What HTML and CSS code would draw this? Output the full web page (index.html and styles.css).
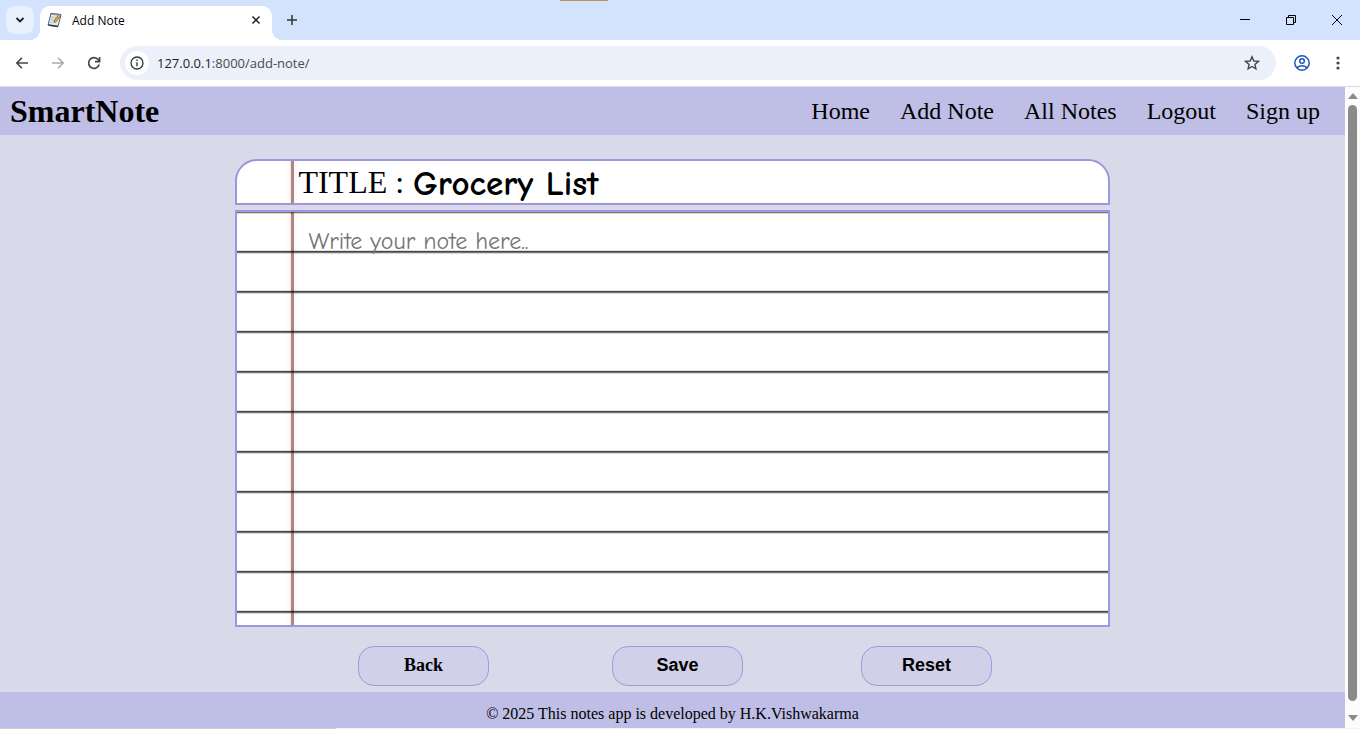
FILE: index.html
```html
<!DOCTYPE html>
<html lang="en">
<head>
<meta charset="utf-8">
<title>Add Note</title>
<link rel="stylesheet" href="styles.css">
</head>
<body>
<div class="tabstrip">
  <button class="tab-search" aria-label="Search tabs"><svg width="10" height="8" viewBox="0 0 10 8"><path d="M1.500 2l3.500 3.500 3.500-3.500" fill="none" stroke="#1f1f1f" stroke-width="1.800"/></svg></button>
  <div class="tab">
    <svg class="favicon" width="16" height="16" viewBox="0 0 16 16"><path d="M4 1.500L14 2.500 11 14.500 1 13z" fill="#dfeaf2" stroke="#59626b"/><path d="M1.300 13L11 14.500" stroke="#30363c" stroke-width="1.600"/><path d="M4 5l5 .5M3.500 7.500l4 .5M3 10l5 .7" stroke="#9bb8cc" stroke-width=".8"/><path d="M4 1v2M6 1v2M8 1.300v2M10 1.500v2" stroke="#4b5862" stroke-width=".7"/><path d="M7.500 10L12.500 3.500" stroke="#705018" stroke-width="2.800"/><path d="M8 9.500L12.500 3.500" stroke="#efb53b" stroke-width="1.500"/></svg>
    <span class="tab-title">Add Note</span>
    <button class="icon-btn" aria-label="Close tab"><svg width="10" height="10" viewBox="0 0 10 10"><path d="M1.500 1.500l7 7M8.500 1.500l-7 7" stroke="#1f1f1f" stroke-width="1.500"/></svg></button>
  </div>
  <button class="icon-btn new-tab" aria-label="New tab"><svg width="12" height="12" viewBox="0 0 12 12"><path d="M6 1v10M1 6h10" stroke="#30343a" stroke-width="1.500"/></svg></button>
  <div class="load-bar"></div>
  <div class="window-controls">
    <button class="icon-btn" aria-label="Minimize"><svg width="12" height="12" viewBox="0 0 12 12"><path d="M1 5.500h10" stroke="#000"/></svg></button>
    <button class="icon-btn" aria-label="Restore"><svg width="12" height="12" viewBox="0 0 12 12"><path d="M1.500 3.500h7v7h-7zM3.500 3.500v-2h7v7h-2" fill="none" stroke="#000"/></svg></button>
    <button class="icon-btn" aria-label="Close"><svg width="12" height="12" viewBox="0 0 12 12"><path d="M1 1l10 10M11 1L1 11" stroke="#000"/></svg></button>
  </div>
</div>
<div class="toolbar">
  <button class="icon-btn" aria-label="Back"><svg width="14" height="14" viewBox="0 0 14 14"><path d="M13 7H2M7 1.800L1.800 7 7 12.200" fill="none" stroke="#44474a" stroke-width="1.600"/></svg></button>
  <button class="icon-btn" aria-label="Forward"><svg width="14" height="14" viewBox="0 0 14 14"><path d="M1 7h11M7 1.800L12.200 7 7 12.200" fill="none" stroke="#aaacae" stroke-width="1.600"/></svg></button>
  <button class="icon-btn" aria-label="Reload"><svg width="14" height="14" viewBox="0 0 14 14"><path d="M12.200 8.500A5.400 5.400 0 1 1 11.300 3.700L12.500 5M12.600 1v4.600H8" fill="none" stroke="#44474a" stroke-width="1.700"/></svg></button>
  <div class="omnibox">
    <button class="site-info" aria-label="Site information"><svg width="14" height="14" viewBox="0 0 14 14"><circle cx="7" cy="7" r="6" fill="none" stroke="#34373b" stroke-width="1.300"/><path d="M7 6.200v4M7 3.600v1.400" stroke="#34373b" stroke-width="1.400"/></svg></button>
    <span class="url"><span class="host">127.0.0.1</span>:8000/add-note/</span>
    <button class="icon-btn star" aria-label="Bookmark"><svg width="16" height="16" viewBox="0 0 16 16"><path d="M8 1.800l1.800 4.200 4.600.4-3.500 3 1 4.500L8 11.500l-3.900 2.400 1-4.500-3.500-3 4.600-.4z" fill="none" stroke="#44474a" stroke-width="1.400"/></svg></button>
  </div>
  <button class="icon-btn profile" aria-label="Profile"><svg width="18" height="18" viewBox="0 0 18 18"><g fill="none" stroke="#1a57b8" stroke-width="1.500"><circle cx="9" cy="9" r="7.200"/><circle cx="9" cy="7" r="2.300"/><path d="M4 14.200C6 11 12 11 14 14.200"/></g></svg></button>
  <button class="icon-btn" aria-label="Menu"><svg width="4" height="14" viewBox="0 0 4 14"><g fill="#44474a"><circle cx="2" cy="2" r="1.600"/><circle cx="2" cy="7" r="1.600"/><circle cx="2" cy="12" r="1.600"/></g></svg></button>
</div>
<div class="viewport">
  <div class="page">
    <header class="site-header">
      <h1 class="brand">SmartNote</h1>
      <nav class="site-nav"><a href="#">Home</a><a href="#">Add Note</a><a href="#">All Notes</a><a href="#">Logout</a><a href="#">Sign up</a></nav>
    </header>
    <form class="note-form">
      <div class="title-row">
        <label for="title">TITLE :</label>
        <input id="title" class="title-input" type="text" value="Grocery List">
      </div>
      <textarea class="note-body" aria-label="Note" placeholder="Write your note here.."></textarea>
      <div class="actions">
        <a class="action back" href="#">Back</a>
        <button class="action" type="submit">Save</button>
        <button class="action" type="reset">Reset</button>
      </div>
    </form>
    <footer class="site-footer">© 2025 This notes app is developed by H.K.Vishwakarma</footer>
  </div>
  <div class="scrollbar">
    <svg width="10" height="6" viewBox="0 0 10 6"><path d="M5 0l5 6H0z" fill="#8a8a8a"/></svg>
    <div class="thumb"></div>
    <svg width="10" height="6" viewBox="0 0 10 6"><path d="M0 0h10L5 6z" fill="#8a8a8a"/></svg>
  </div>
</div>
<div class="bottom-edge"></div>
</body>
</html>
```
FILE: styles.css
```css
* { box-sizing: border-box; }
body {
  margin: 0;
  height: 100vh;
  display: flex;
  flex-direction: column;
  overflow: hidden;
  background: #fff;
  font-family: "Liberation Serif", "Times New Roman", serif;
  color: #000;
}
button { padding: 0; border: 0; background: none; font: inherit; color: inherit; }
svg { display: block; }
.icon-btn { display: flex; align-items: center; justify-content: center; flex: none; }

/* Browser chrome */
.tabstrip {
  position: relative;
  flex: none;
  display: flex;
  align-items: center;
  height: 40px;
  padding: 0 17px 0 6px;
  background: #d3e3fd;
  font-family: "Open Sans", sans-serif;
}
.tab-search {
  display: flex;
  align-items: center;
  justify-content: center;
  width: 28px;
  height: 28px;
  border-radius: 9px;
  background: #e9f1fe;
}
.tab {
  position: relative;
  align-self: flex-end;
  display: flex;
  align-items: center;
  width: 232px;
  height: 34px;
  margin-left: 6px;
  padding: 0 11px 6px 7px;
  border-radius: 10px 10px 0 0;
  background: #fff;
  font-size: 12px;
}
.tab::before, .tab::after {
  content: "";
  position: absolute;
  bottom: 0;
  width: 10px;
  height: 10px;
}
.tab::before { right: 100%; background: radial-gradient(circle at 0 0, transparent 10px, #fff 10px); }
.tab::after { left: 100%; background: radial-gradient(circle at 100% 0, transparent 10px, #fff 10px); }
.tab-title { flex: 1; margin-left: 9px; }
.new-tab { margin-left: 14px; }
.load-bar {
  position: absolute;
  top: 0;
  left: 560px;
  width: 240px;
  height: 1px;
  background: linear-gradient(90deg, #b8905f 20%, #dde5f3 20%);
}
.window-controls { display: flex; gap: 34px; margin-left: auto; }
.toolbar {
  flex: none;
  display: flex;
  align-items: center;
  gap: 22px;
  height: 47px;
  padding: 0 20px 0 15px;
  border-bottom: 1px solid #d9dce3;
  background: #fff;
  font-family: "Open Sans", sans-serif;
}
.omnibox {
  flex: 1;
  display: flex;
  align-items: center;
  height: 34px;
  margin-right: -5px;
  margin-left: -3px;
  padding: 0 16px 0 5px;
  border-radius: 17px;
  background: #ebf0fa;
}
.site-info {
  display: flex;
  align-items: center;
  justify-content: center;
  width: 24px;
  height: 24px;
  border-radius: 12px;
  background: #fff;
}
.url { flex: 1; margin-left: 8px; font-size: 13px; color: #494c50; }
.host { color: #1f1f1f; }
.profile { margin-right: 3px; }

/* Page */
.viewport { flex: 1; display: flex; min-height: 0; }
.page { flex: 1; display: flex; flex-direction: column; min-width: 0; background: #dad9e9; }
.site-header {
  flex: none;
  display: flex;
  align-items: center;
  justify-content: space-between;
  height: 48px;
  padding: 0 25px 0 10px;
  background: #bfbee6;
}
.brand { margin: 0; font-size: 32px; }
.site-nav { display: flex; gap: 30px; font-size: 24px; }
.site-nav a { color: #000; text-decoration: none; }
.note-form {
  flex: 1;
  display: flex;
  flex-direction: column;
  width: 65%;
  min-height: 0;
  margin: 0 auto;
  padding: 24px 0 6px;
}
.title-row, .note-body {
  --margin-line: linear-gradient(90deg, transparent 48px, #fff8f5 53px, #efd8d4 54px, #a88885 54px, #a88885 57px, #fff4f1 57px, transparent 62px);
  border: 2px solid #9d96e0;
}
.title-row {
  flex: none;
  display: flex;
  align-items: center;
  height: 46px;
  padding-left: 61px;
  border-radius: 22px 22px 0 0;
  background: var(--margin-line), #fff;
  font-size: 32px;
}
.title-input {
  flex: 1;
  min-width: 0;
  height: 40px;
  margin: 0 20px 0 9px;
  padding: 2px 0 0;
  border: 0;
  outline: 0;
  background: none;
  font-family: "Comic Sans MS", "Comic Neue", "Open Sans", sans-serif;
  font-size: 35px;
  font-weight: 700;
}
.note-body {
  flex: 1;
  display: block;
  width: 100%;
  min-height: 0;
  margin: 5px 0 0;
  padding: 9px 20px 10px 71px;
  outline: 0;
  resize: none;
  background:
    var(--margin-line),
    repeating-linear-gradient(#777 0, #777 1px, #d8d8d8 1px, #d8d8d8 2px, #fff 2px, #fff 38px, #e0e0e0 38px, #e0e0e0 39px, #444 39px, #444 40px);
  font-family: "Comic Sans MS", "Comic Neue", "Open Sans", sans-serif;
  background-blend-mode: multiply;
  font-size: 24px;
  line-height: 40px;
}
.note-body::placeholder { color: #757575; opacity: 1; }
.actions {
  flex: none;
  display: flex;
  justify-content: center;
  gap: 118px;
  padding-left: 5px;
  margin-top: 19px;
}
.action {
  width: 131px;
  height: 40px;
  padding-bottom: 2px;
  border: 1px solid #9f9bdf;
  border-radius: 16px;
  background: #d0d0e8;
  font: bold 18px/36px "Liberation Sans", Arial, sans-serif;
  color: #000;
  text-align: center;
  text-decoration: none;
}
.back { margin-right: 5px; font-family: "Liberation Serif", "Times New Roman", serif; }
.site-footer {
  flex: none;
  height: 36px;
  padding-top: 13px;
  background: #bfbee6;
  font-size: 16px;
  line-height: 18px;
  text-align: center;
}
.scrollbar {
  flex: none;
  display: flex;
  flex-direction: column;
  align-items: center;
  gap: 6px;
  width: 15px;
  padding: 6px 0 7px;
  background: #fcfcfc;
}
.thumb { flex: 1; width: 9px; margin-bottom: 8px; border-radius: 5px; background: #8a8a8a; }
.bottom-edge { flex: none; height: 1px; background: linear-gradient(90deg, #cfcdd0 336px, #f4f3f6 336px); }
```
